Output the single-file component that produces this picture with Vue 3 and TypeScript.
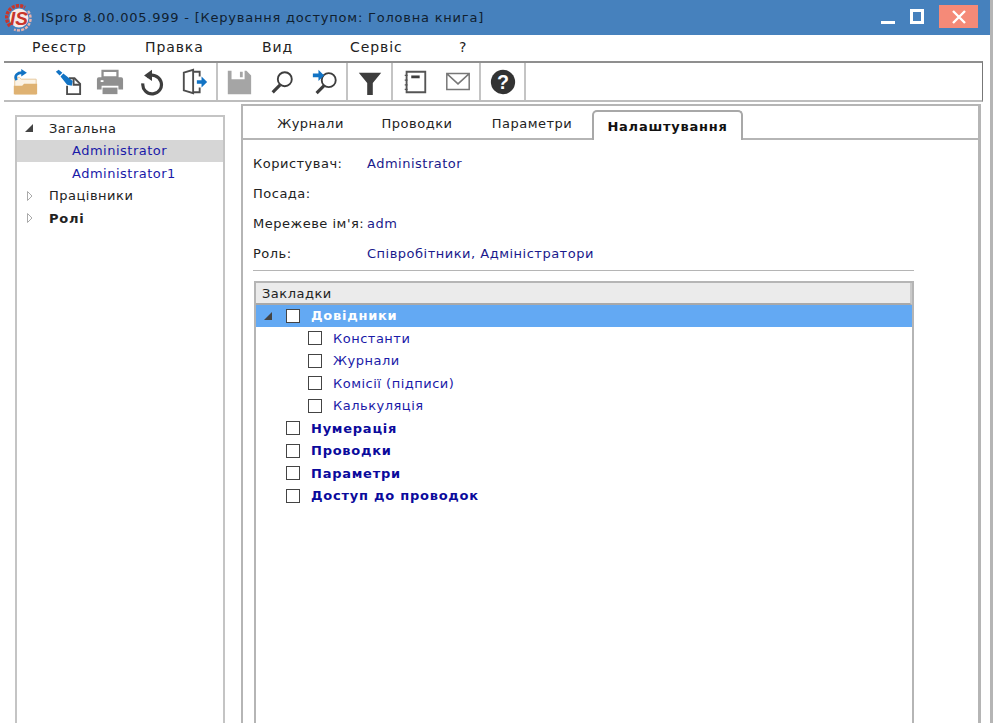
<template>
  <div class="window">
    <!-- Title bar -->
    <header class="titlebar">
      <svg class="logo" width="28" height="28" viewBox="0 0 28 28">
        <path d="M5 22A12 12 0 0 1 20 3.5" fill="none" stroke="#c8352b" stroke-width="3.4" stroke-dasharray="3 1.2" />
        <path d="M23 7A12 12 0 0 1 9 25.5" fill="none" stroke="#e9b3ac" stroke-width="2.4" stroke-dasharray="3 1.2" />
        <circle cx="14" cy="14" r="9.5" fill="#f6e9e6" />
        <text x="14" y="21" text-anchor="middle" class="logo-text">IS</text>
      </svg>
      <span class="title">ISpro 8.00.005.999 - [Керування доступом:  Головна книга]</span>
      <div class="win-controls">
        <span class="win-min"></span>
        <span class="win-max"></span>
        <button class="win-close">
          <svg width="16" height="16" viewBox="0 0 16 16">
            <path d="M2 2 L14 14 M14 2 L2 14" stroke="#fff" stroke-width="2.4" />
          </svg>
        </button>
      </div>
    </header>

    <!-- Menu -->
    <nav class="menubar">
      <span v-for="item in menu" :key="item.label" class="menu-item" :style="{ width: item.width + 'px' }">{{ item.label }}</span>
    </nav>

    <!-- Toolbar -->
    <div class="toolbar">
      <div class="tool-group">
        <svg class="tool" viewBox="0 0 30 30">
          <path d="M4 10h5l2 2h16v16H4z" fill="#fbf3e6" stroke="#e6c79a" />
          <path d="M3 28v-9h9l2-2h14v11z" fill="#dfb272" />
          <path d="M6 13c-3-5 1-8 6-8" fill="none" stroke="#1273c4" stroke-width="2.8" />
          <path d="M11 1l6 4-6 4z" fill="#1273c4" />
        </svg>
        <svg class="tool" viewBox="0 0 30 30">
          <path d="M16 11h6l6 6v11H14v-9" fill="none" stroke="#4d4d4d" stroke-width="2" />
          <path d="M21 11v7h7" fill="none" stroke="#4d4d4d" stroke-width="2" />
          <path d="M2 4l3-2 4 3-3 3zM7 9l3-3 10 8-1 5-5-1z" fill="#1273c4" />
        </svg>
        <svg class="tool" viewBox="0 0 30 30">
          <path d="M7 3h16v7H7z" fill="none" stroke="#8f8f8f" stroke-width="2.4" />
          <path d="M1 12a2 2 0 0 1 2-2h24a2 2 0 0 1 2 2v11h-5v-4H6v4H1z" fill="#8f8f8f" />
          <path d="M7 21h16v7H7z" fill="#8f8f8f" />
          <path d="M5 13h3v2H5z" fill="#fff" />
        </svg>
        <svg class="tool" viewBox="0 0 30 30">
          <path d="M9.500 9.500a10 10 0 1 1-4.300 7" fill="none" stroke="#3d3d3d" stroke-width="3.4" />
          <path d="M15 2v12L6.500 8z" fill="#3d3d3d" />
        </svg>
        <svg class="tool" viewBox="0 0 30 30">
          <path d="M3 5l10-3v25L3 24zM13 4h7v5M20 21v5h-7" fill="none" stroke="#4d4d4d" stroke-width="2" />
          <path d="M17 13h5V9l6 6-6 6v-4h-5z" fill="#1273c4" />
        </svg>
      </div>
      <div class="tool-group">
        <svg class="tool" viewBox="0 0 30 30">
          <path d="M3 3h4v9h14V3h2l5 5v20H3zM16 4h3v6h-3z" fill="#a5a5a5" />
        </svg>
        <svg class="tool" viewBox="0 0 30 30">
          <circle cx="18" cy="12" r="7.500" fill="none" stroke="#3d3d3d" stroke-width="2" />
          <path d="M13 18l-8 8" stroke="#3d3d3d" stroke-width="3.4" />
        </svg>
        <svg class="tool" viewBox="0 0 30 30">
          <circle cx="19" cy="13" r="7.500" fill="none" stroke="#3d3d3d" stroke-width="2" />
          <path d="M14 19l-8 8" stroke="#3d3d3d" stroke-width="3.4" />
          <path d="M2 6h6V2l6 6-6 6v-4H2z" fill="#1273c4" />
        </svg>
      </div>
      <div class="tool-group">
        <svg class="tool" viewBox="0 0 30 30">
          <path d="M3 5h24l-9 11v13h-6V16z" fill="#3d3d3d" />
        </svg>
      </div>
      <div class="tool-group">
        <svg class="tool" viewBox="0 0 30 30">
          <path d="M6 4h20v22H6z" fill="none" stroke="#555" stroke-width="2" />
          <path d="M11 8h9v3h-9z" fill="#3d3d3d" />
          <path d="M4 8h3M4 13h3M4 18h3M4 23h3" stroke="#555" stroke-width="1.4" />
        </svg>
        <svg class="tool" viewBox="0 0 30 30">
          <path d="M3 6h24v17H3zM3 6l12 11L27 6" fill="none" stroke="#777" stroke-width="1.6" />
        </svg>
      </div>
      <div class="tool-group">
        <svg class="tool" viewBox="0 0 30 30">
          <circle cx="15" cy="15" r="13" fill="#333" />
          <text x="15" y="22" text-anchor="middle" class="help-text">?</text>
        </svg>
      </div>
    </div>

    <main class="content">
      <!-- Users tree -->
      <aside class="user-tree">
        <div class="user-row">
          <svg class="arrow" viewBox="0 0 8 10"><path d="M0 9h8V1z" fill="#444" /></svg>
          <span>Загальна</span>
        </div>
        <div class="user-row child selected">Administrator</div>
        <div class="user-row child">Administrator1</div>
        <div class="user-row">
          <svg class="arrow" viewBox="0 0 8 10"><path d="M2.500 .5l4.500 4.500-4.500 4.500z" fill="#fff" stroke="#aaa" /></svg>
          <span>Працівники</span>
        </div>
        <div class="user-row">
          <svg class="arrow" viewBox="0 0 8 10"><path d="M2.500 .5l4.500 4.500-4.500 4.500z" fill="#fff" stroke="#aaa" /></svg>
          <span class="strong">Ролі</span>
        </div>
      </aside>

      <!-- Details -->
      <section class="details">
        <div class="tabs">
          <span v-for="tab in tabs" :key="tab.label" class="tab" :class="{ active: tab.active }" :style="{ width: tab.width + 'px' }">{{ tab.label }}</span>
        </div>

        <div class="info">
          <div v-for="row in info" :key="row.label" class="info-row">
            <span class="info-label">{{ row.label }}</span>
            <span class="info-value">{{ row.value }}</span>
          </div>
        </div>

        <div class="divider"></div>

        <div class="bookmarks">
          <div class="bookmarks-head">Закладки</div>
          <div
            v-for="node in bookmarks"
            :key="node.label"
            class="node"
            :class="{ selected: node.selected, child: node.child, bold: !node.child }"
          >
            <svg v-if="node.selected" class="arrow node-arrow" viewBox="0 0 8 10"><path d="M0 9h8V1z" fill="#444" /></svg>
            <span class="check"></span>
            <span>{{ node.label }}</span>
          </div>
        </div>
      </section>
    </main>
  </div>
</template>

<script setup lang="ts">
const menu = [
  { label: 'Реєстр', width: 113 },
  { label: 'Правка', width: 117 },
  { label: 'Вид', width: 88 },
  { label: 'Сервіс', width: 109 },
  { label: '?', width: 30 },
]

const tabs = [
  { label: 'Журнали', width: 103 },
  { label: 'Проводки', width: 110 },
  { label: 'Параметри', width: 120 },
  { label: 'Налаштування', width: 151, active: true },
]

const info = [
  { label: 'Користувач:', value: 'Administrator' },
  { label: 'Посада:', value: '' },
  { label: "Мережеве ім'я:", value: 'adm' },
  { label: 'Роль:', value: 'Співробітники, Адміністратори' },
]

const bookmarks = [
  { label: 'Довідники', selected: true },
  { label: 'Константи', child: true },
  { label: 'Журнали', child: true },
  { label: 'Комісії (підписи)', child: true },
  { label: 'Калькуляція', child: true },
  { label: 'Нумерація' },
  { label: 'Проводки' },
  { label: 'Параметри' },
  { label: 'Доступ до проводок' },
]
</script>

<style>
html,
body {
  margin: 0;
  overflow: hidden;
}
</style>

<style scoped>
.window {
  width: 993px;
  height: 723px;
  box-sizing: border-box;
  overflow: hidden;
  display: flex;
  flex-direction: column;
  background: #fff;
  border-right: 3px solid #b5b5b5;
  font-family: 'DejaVu Sans', Verdana, sans-serif;
  font-size: 13px;
  letter-spacing: 0.5px;
  color: #222;
}

.titlebar {
  height: 35px;
  flex: none;
  display: flex;
  align-items: center;
  background: #4681bd;
  padding-left: 5px;
}

.logo {
  flex: none;
}

.logo-text {
  font-family: 'Liberation Sans', sans-serif;
  font-size: 19px;
  font-weight: 700;
  font-style: italic;
  letter-spacing: 0;
  fill: #c8352b;
}

.title {
  margin-left: 8px;
  color: #10202f;
  white-space: pre;
  letter-spacing: 0.78px;
}

.win-controls {
  margin-left: auto;
  display: flex;
  align-items: flex-start;
  height: 100%;
  padding-right: 12px;
}

.win-min {
  width: 14px;
  height: 3px;
  margin-top: 21px;
  margin-right: 15px;
  background: #fff;
}

.win-max {
  width: 8px;
  height: 9px;
  margin-top: 9px;
  margin-right: 15px;
  border: 3px solid #fff;
}

.win-close {
  width: 39px;
  height: 23px;
  margin-top: 5px;
  padding: 0;
  border: none;
  display: flex;
  align-items: center;
  justify-content: center;
  background: #f58a78;
}

.menubar {
  height: 26px;
  box-sizing: border-box;
  flex: none;
  display: flex;
  align-items: center;
  padding: 0 0 2px 32px;
  font-size: 14px;
  letter-spacing: 0.9px;
}

.toolbar {
  height: 41px;
  flex: none;
  box-sizing: border-box;
  margin-left: 4px;
  width: 979px;
  display: flex;
  align-items: center;
  border-top: 2px solid #8f8f8f;
  border-right: 1px solid #777;
  border-bottom: 2px solid #bdbdbd;
}

.tool-group {
  display: flex;
  align-items: center;
  justify-content: space-around;
  height: 100%;
  box-sizing: border-box;
  border-right: 2px solid #c4c4c4;
}

.tool-group:nth-child(1) {
  width: 214px;
}

.tool-group:nth-child(2) {
  width: 130px;
}

.tool-group:nth-child(3),
.tool-group:nth-child(5) {
  width: 45px;
}

.tool-group:nth-child(4) {
  width: 88px;
}

.tool {
  width: 28px;
  height: 28px;
  flex: none;
}

.help-text {
  font-family: 'Liberation Sans', sans-serif;
  font-size: 21px;
  font-weight: 700;
  letter-spacing: 0;
  fill: #fff;
}

.content {
  flex: 1;
  min-height: 0;
  display: flex;
}

.user-tree {
  width: 210px;
  box-sizing: border-box;
  margin: 13px 0 -20px 15px;
  border: 2px solid #c4c4c4;
  flex: none;
}

.user-row {
  height: 22.5px;
  display: flex;
  align-items: center;
  padding-left: 8px;
  white-space: nowrap;
}

.user-row.child {
  padding-left: 55px;
  color: #1a1aa8;
}

.user-row.selected {
  background: #d6d6d6;
}

.arrow {
  width: 8px;
  height: 10px;
  flex: none;
  margin-right: 16px;
}

.strong {
  font-weight: 700;
  letter-spacing: 0.75px;
}

.details {
  width: 740px;
  box-sizing: border-box;
  margin: 2px 0 -20px 16px;
  flex: none;
  border: solid #b5b5b5;
  border-width: 2px 3px 0 2px;
  display: flex;
  flex-direction: column;
}

.tabs {
  height: 34px;
  flex: none;
  box-sizing: border-box;
  display: flex;
  align-items: stretch;
  padding: 3px 0 0 16px;
  border-bottom: 2px solid #b5b5b5;
}

.tab {
  display: flex;
  align-items: center;
  justify-content: center;
}

.tab.active {
  box-sizing: border-box;
  height: 30px;
  margin-top: 1px;
  border: 2px solid #a8a8a8;
  border-bottom: none;
  border-radius: 5px 5px 0 0;
  background: #fff;
  font-weight: 700;
  letter-spacing: 0.75px;
  color: #111;
}

.info {
  padding: 8px 0 0 10px;
}

.info-row {
  height: 30px;
  display: flex;
  align-items: center;
}

.info-label {
  width: 114px;
  flex: none;
  white-space: nowrap;
}

.info-value {
  color: #1a1a8c;
}

.divider {
  margin: 2px 0 0 10px;
  width: 661px;
  height: 1px;
  flex: none;
  background: #b5b5b5;
}

.bookmarks {
  margin: 10px 0 0 11px;
  width: 660px;
  box-sizing: border-box;
  flex: 1;
  border: solid #b5b5b5;
  border-width: 2px 2px 0 2px;
}

.bookmarks-head {
  height: 21.5px;
  box-sizing: border-box;
  padding: 3px 0 0 6px;
  background: #ebebeb;
  border-bottom: 2px solid #a9a9a9;
  border-right: 2px solid #c9c9c9;
}

.node {
  height: 22.5px;
  display: flex;
  align-items: center;
  padding-left: 30px;
  color: #1a1aa8;
}

.node.child {
  padding-left: 52px;
}

.node.bold {
  font-weight: 700;
  letter-spacing: 0.75px;
  color: #0a0a9c;
}

.node.selected {
  background: #63a9f3;
  color: #fff;
  padding-left: 8px;
}

.node-arrow {
  margin-right: 14px;
}

.check {
  width: 14px;
  height: 14px;
  box-sizing: border-box;
  flex: none;
  border: 1.5px solid #444;
  background: #fff;
  margin-right: 11px;
}
</style>
